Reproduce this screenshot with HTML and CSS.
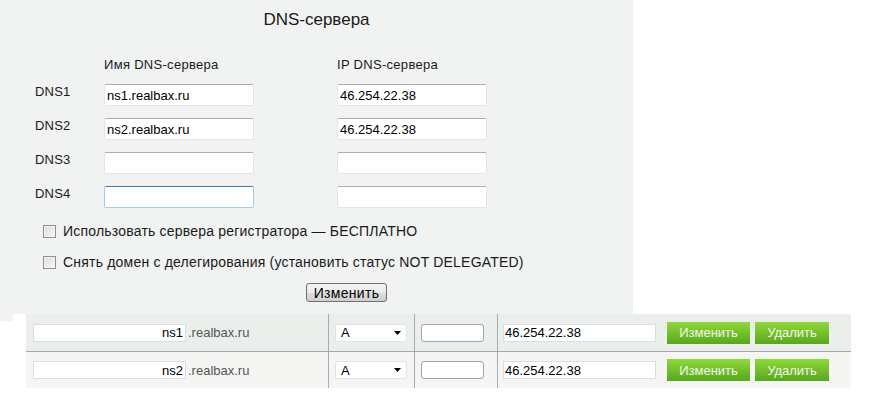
FILE: index.html
```html
<!DOCTYPE html>
<html lang="ru">
<head>
  <meta charset="UTF-8">
  <title>DNS-сервера</title>
  <link rel="stylesheet" href="styles.css">
</head>
<body>
  <div class="dns-panel">
    <h2 class="dns-title">DNS-сервера</h2>

    <div class="dns-grid">
      <span></span>
      <span class="col-head">Имя DNS-сервера</span>
      <span class="col-head">IP DNS-сервера</span>

      <span class="dns-label">DNS1</span>
      <input class="txt" type="text" value="ns1.realbax.ru">
      <input class="txt" type="text" value="46.254.22.38">

      <span class="dns-label">DNS2</span>
      <input class="txt" type="text" value="ns2.realbax.ru">
      <input class="txt" type="text" value="46.254.22.38">

      <span class="dns-label">DNS3</span>
      <input class="txt" type="text">
      <input class="txt" type="text">

      <span class="dns-label">DNS4</span>
      <input class="txt focused" type="text">
      <input class="txt" type="text">
    </div>

    <label class="check"><input type="checkbox"> Использовать сервера регистратора — БЕСПЛАТНО</label>
    <label class="check"><input type="checkbox"> Снять домен с делегирования (установить статус NOT DELEGATED)</label>

    <button class="btn-sys">Изменить</button>
  </div>

  <div class="records">
    <div class="rec-row">
      <div class="cell c-name"><input class="sub" type="text" value="ns1"><span class="zone">.realbax.ru</span></div>
      <div class="cell c-type"><div class="pick">A<svg width="7" height="4" viewBox="0 0 7 4"><path d="M0 0h7L3.5 4z" fill="#000"/></svg></div></div>
      <div class="cell c-ttl"><input class="ttl" type="text"></div>
      <div class="cell c-val">
        <input class="ip" type="text" value="46.254.22.38">
        <button class="btn-green wide">Изменить</button>
        <button class="btn-green">Удалить</button>
      </div>
    </div>
    <div class="rec-row alt">
      <div class="cell c-name"><input class="sub" type="text" value="ns2"><span class="zone">.realbax.ru</span></div>
      <div class="cell c-type"><div class="pick">A<svg width="7" height="4" viewBox="0 0 7 4"><path d="M0 0h7L3.5 4z" fill="#000"/></svg></div></div>
      <div class="cell c-ttl"><input class="ttl" type="text"></div>
      <div class="cell c-val">
        <input class="ip" type="text" value="46.254.22.38">
        <button class="btn-green wide">Изменить</button>
        <button class="btn-green">Удалить</button>
      </div>
    </div>
  </div>
</body>
</html>
```

FILE: styles.css
```css
body {
  margin: 0;
  font-family: "Liberation Sans", Arial, sans-serif;
  background-color: #ffffff;
  color: #1a1a1a;
}

input, button {
  font-family: "Liberation Sans", Arial, sans-serif;
}

.dns-panel {
  width: 633px;
  height: 321px;
  box-sizing: border-box;
  padding: 10px 0 0 35px;
  background-color: #f1f2f2;
}

.dns-title {
  margin: 0 0 0 -35px;
  font-size: 17px;
  font-weight: normal;
  line-height: 20px;
  text-align: center;
}

.dns-grid {
  display: grid;
  grid-template-columns: 69px 233px 150px;
  grid-template-rows: 15px;
  grid-auto-rows: 22px;
  row-gap: 12px;
  margin-top: 27px;
  font-size: 13px;
  line-height: 16px;
}

.col-head {
  letter-spacing: 0.3px;
}

.dns-label {
  letter-spacing: 0.2px;
}

.txt {
  width: 150px;
  height: 22px;
  box-sizing: border-box;
  padding: 0 2px;
  border: 1px solid #e2e6ea;
  border-top-color: #abadb3;
  border-radius: 2px;
  background: #fff;
  font-size: 13px;
  color: #000;
  outline: none;
}

.txt.focused {
  border-color: #a7cbe6;
  border-top-color: #3d7bad;
}

.check {
  display: flex;
  align-items: center;
  height: 16px;
  margin-top: 15px;
  font-size: 14px;
  letter-spacing: 0.2px;
  color: #1a1a1a;
}

.check input {
  appearance: none;
  width: 13px;
  height: 13px;
  margin: 0 7px 0 8px;
  border: 1px solid #8e8f8f;
  background: linear-gradient(135deg, #dcdcdc, #f7f7f7);
  box-shadow: inset 0 0 0 1px #f4f4f4;
}

.btn-sys {
  display: block;
  margin: 13px 0 0 271px;
  width: 81px;
  height: 19px;
  padding: 0;
  border: 1px solid #707070;
  border-radius: 3px;
  background: linear-gradient(#f2f2f2 0%, #ebebeb 50%, #dddddd 51%, #cfcfcf 100%);
  font-size: 14px;
  letter-spacing: 0.3px;
  color: #000;
}

.records {
  width: 825px;
  margin: -7px 0 0 13px;
  padding-left: 13px;
  background-color: #fff;
}

.rec-row {
  display: flex;
  height: 37px;
  background-color: #ebefeb;
  border-bottom: 1px solid #a6a6a6;
}

.rec-row.alt {
  height: 36px;
  background-color: #f5f5f3;
  border-bottom: none;
}

.cell {
  display: flex;
  align-items: center;
  box-sizing: border-box;
  border-right: 1px solid #ababab;
  font-size: 13px;
}

.c-name {
  width: 303px;
  padding-left: 7px;
}

.c-type {
  width: 86px;
  padding-left: 6px;
}

.c-ttl {
  width: 83px;
  padding-left: 6px;
}

.c-val {
  flex: 1;
  padding-left: 5px;
  border-right: none;
}

.sub {
  width: 153px;
  height: 18px;
  box-sizing: border-box;
  padding: 0 2px;
  border: 1px solid #dcdce4;
  background: #fff;
  text-align: right;
  font-size: 13px;
  color: #000;
}

.zone {
  margin-left: 2px;
  color: #555;
}

.pick {
  display: flex;
  align-items: center;
  justify-content: space-between;
  width: 72px;
  height: 18px;
  box-sizing: border-box;
  padding: 0 5px 0 5px;
  border: 1px solid #e2e2e2;
  border-radius: 2px;
  background: #fff;
  color: #000;
}

.ttl {
  width: 63px;
  height: 18px;
  box-sizing: border-box;
  border: 1px solid #a3a3a3;
  border-radius: 3px;
  background: #fff;
}

.ip {
  width: 153px;
  height: 18px;
  box-sizing: border-box;
  padding: 0 1px;
  border: 1px solid #dcdce4;
  background: #fff;
  font-size: 13px;
  color: #000;
}

.btn-green {
  width: 74px;
  height: 22px;
  margin-left: 5px;
  padding: 0;
  border: none;
  background: linear-gradient(#8fd83c, #5aa61f);
  color: #eef9e4;
  font-size: 13px;
}

.btn-green.wide {
  width: 83px;
  margin-left: 11px;
}
```
